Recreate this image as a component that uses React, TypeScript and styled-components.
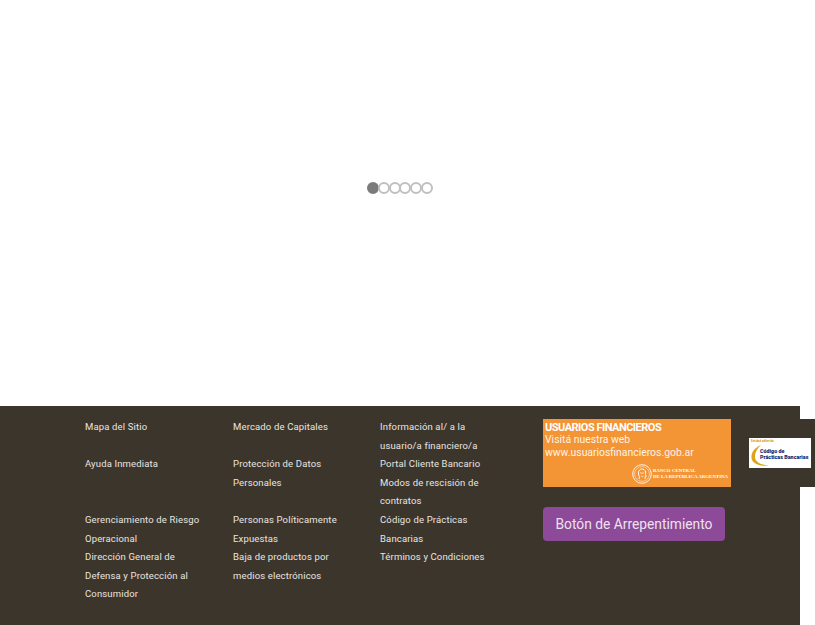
import React from "react";
import styled, { createGlobalStyle } from "styled-components";

const Global = createGlobalStyle`
  html, body { margin: 0; padding: 0; background: #fff; overflow: hidden; }
  body { font-family: Roboto, "Liberation Sans", sans-serif; }
`;
const Page = styled.div`
  width: 815px;
  height: 625px;
  overflow: hidden;
  display: flex;
  flex-direction: column;
`;
const Slider = styled.section`
  height: 406px;
  flex: none;
  padding: 182px 0 0 367px;
  box-sizing: border-box;
  display: flex;
  align-items: flex-start;
`;
const Dot = styled.span<{ $active?: boolean }>`
  width: 12px;
  height: 12px;
  margin-right: -1.2px;
  box-sizing: border-box;
  border-radius: 50%;
  border: 2px solid ${p => (p.$active ? "#7b7b7b" : "#c0c0c0")};
  background: ${p => (p.$active ? "#7b7b7b" : "#fff")};
`;
const Footer = styled.footer`
  width: 800px;
  height: 219px;
  flex: none;
  background: #3c352c;
  box-sizing: border-box;
  padding: 12px 0 0 85px;
  display: flex;
`;
const LinkColumn = styled.ul<{ $w: number }>`
  list-style: none;
  margin: 0;
  padding: 0;
  width: ${p => p.$w}px;
  flex: none;
`;
const LinkItem = styled.li`
  font-size: 9.5px;
  line-height: 18.6px;
  letter-spacing: 0.15px;
  color: #e8e5e0;
  white-space: nowrap;
`;
const Gap = styled.li`
  height: 18.6px;
`;
const Aside = styled.div`
  display: flex;
  flex-direction: column;
  align-items: flex-start;
  padding-top: 1px;
  flex: none;
`;
const BannerRow = styled.div`
  display: flex;
  width: 272px;
`;
const Banner = styled.div`
  width: 188px;
  height: 68px;
  background: #f39435;
  box-sizing: border-box;
  padding: 2px 0 0 2px;
  color: #fff;
  position: relative;
  flex: none;
`;
const BannerTitle = styled.div`
  font-size: 11px;
  font-weight: 700;
  line-height: 13px;
  letter-spacing: -0.5px;
  white-space: nowrap;
`;
const BannerText = styled.div`
  font-size: 10.4px;
  line-height: 12.5px;
  white-space: nowrap;
  color: #fff3e4;
`;
const Seal = styled.svg`
  position: absolute;
  left: 89px;
  top: 45px;
`;
const BankName = styled.div`
  position: absolute;
  left: 110px;
  top: 49px;
  font-family: "Liberation Serif", serif;
  font-weight: 700;
  font-size: 4.9px;
  line-height: 6px;
  white-space: nowrap;
`;
const LogoTile = styled.div`
  width: 84px;
  height: 68px;
  background: #3c352c;
  flex: none;
  box-sizing: border-box;
  padding: 19px 0 0 18px;
`;
const Logo = styled.div`
  width: 62px;
  height: 30px;
  background: #fff;
  position: relative;
  color: #0e1f6e;
`;
const LogoTag = styled.div`
  position: absolute;
  left: 2px;
  top: 1px;
  font-size: 3px;
  line-height: 4px;
  font-weight: 700;
  color: #d99a1c;
  white-space: nowrap;
`;
const LogoText = styled.div`
  position: absolute;
  left: 11px;
  top: 10px;
  font-size: 5.4px;
  line-height: 6px;
  font-weight: 900;
  white-space: nowrap;
`;
const Swoosh = styled.svg`
  position: absolute;
  left: 1px;
  top: 6px;
`;
const Regret = styled.button`
  margin-top: 20px;
  width: 182px;
  height: 34px;
  border: 0;
  border-radius: 4px;
  background: #8c4a98;
  color: #ece2ee;
  font-family: Roboto, "Liberation Sans", sans-serif;
  font-size: 13.8px;
  padding: 0;
  white-space: nowrap;
`;

const col1: (string | null)[] = ["Mapa del Sitio", null, "Ayuda Inmediata", null, null, "Gerenciamiento de Riesgo", "Operacional", "Dirección General de", "Defensa y Protección al", "Consumidor"];
const col2: (string | null)[] = ["Mercado de Capitales", null, "Protección de Datos", "Personales", null, "Personas Políticamente", "Expuestas", "Baja de productos por", "medios electrónicos"];
const col3: (string | null)[] = ["Información al/ a la", "usuario/a financiero/a", "Portal Cliente Bancario", "Modos de rescisión de", "contratos", "Código de Prácticas", "Bancarias", "Términos y Condiciones"];

const Links = ({ items, w }: { items: (string | null)[]; w: number }) => (
  <LinkColumn $w={w}>
    {items.map((t, i) => (t ? <LinkItem key={i}>{t}</LinkItem> : <Gap key={i} />))}
  </LinkColumn>
);

export default function App() {
  return (
    <Page>
      <Global />
      <Slider>
        {[0, 1, 2, 3, 4, 5].map(i => (
          <Dot key={i} $active={i === 0} />
        ))}
      </Slider>
      <Footer>
        <Links items={col1} w={148} />
        <Links items={col2} w={147} />
        <Links items={col3} w={163} />
        <Aside>
          <BannerRow>
            <Banner>
              <BannerTitle>USUARIOS FINANCIEROS</BannerTitle>
              <BannerText>Visitá nuestra web</BannerText>
              <BannerText>www.usuariosfinancieros.gob.ar</BannerText>
              <Seal width="20" height="20" viewBox="0 0 20 20" fill="none" stroke="#fff">
                <circle cx="10" cy="10" r="9.3" strokeWidth="0.9" />
                <circle cx="10" cy="10" r="7.4" strokeWidth="0.5" />
                <path d="M7 15c1-2 0-3-.5-5C6 7 8 4.600 10.500 5c2.300.4 3.500 2.500 3 4.500-.3 1.300.3 2 .8 2.800l-1.300.6.200 2" strokeWidth="1" />
                <path d="M8 8.500c1 1 3 1 4 0M9 12c.8.500 1.600.500 2.400 0" strokeWidth="0.7" />
              </Seal>
              <BankName>
                BANCO CENTRAL
                <br />
                DE LA REPÚBLICA ARGENTINA
              </BankName>
            </Banner>
            <LogoTile>
              <Logo>
                <LogoTag>Entidad adherida</LogoTag>
                <Swoosh width="24" height="24" viewBox="0 0 24 24" fill="none">
                  <path d="M11 1C4 4 1 9 1.500 14c.5 5 7 8.500 17 7.500C11 21 5.500 18 5 13.500 4.600 9 7 4.500 11 1z" fill="#e0a21e" />
                </Swoosh>
                <LogoText>
                  Código de
                  <br />
                  Prácticas Bancarias
                </LogoText>
              </Logo>
            </LogoTile>
          </BannerRow>
          <Regret>Botón de Arrepentimiento</Regret>
        </Aside>
      </Footer>
    </Page>
  );
}
